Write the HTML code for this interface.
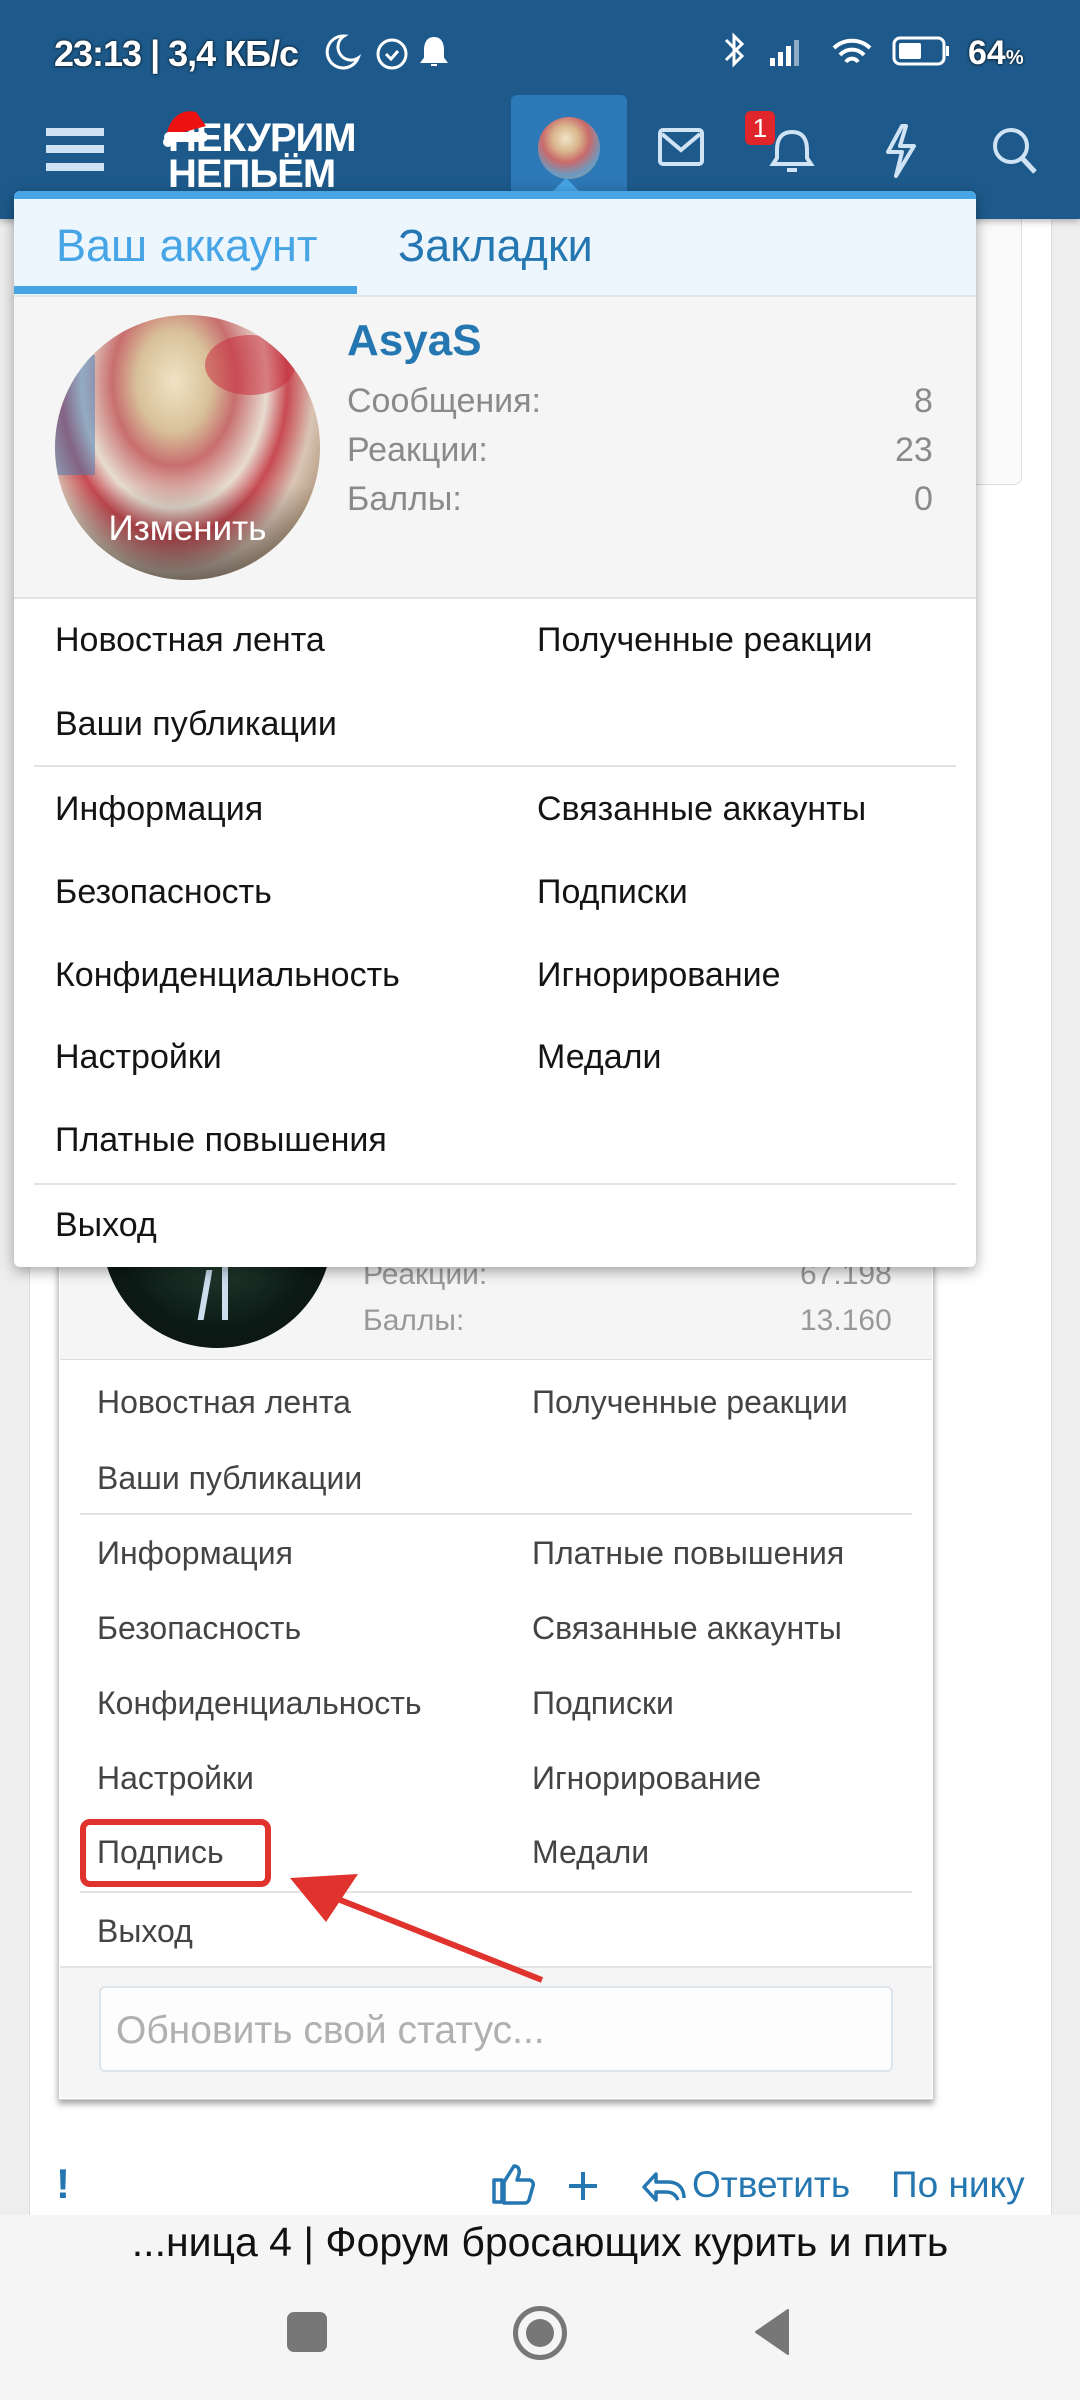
<!DOCTYPE html>
<html><head><meta charset="utf-8">
<style>
*{margin:0;padding:0;box-sizing:border-box}
body{width:1080px;height:2400px;position:relative;overflow:hidden;background:#eeeeee;font-family:"Liberation Sans","DejaVu Sans",sans-serif}
.a{position:absolute}
.t{position:absolute;white-space:nowrap;line-height:1}
</style></head><body>
<!-- page card -->
<div class="a" style="left:29px;top:200px;width:1023px;height:2015px;background:#fff;border-left:1px solid #ddd;border-right:1px solid #ddd"></div>
<div class="a" style="left:900px;top:210px;width:122px;height:275px;border:1px solid #ddd;border-top:none;border-radius:0 0 8px 8px;background:#fafafa"></div>
<!-- header -->
<div class="a" style="left:0;top:0;width:1080px;height:219px;background:#1d5a8b;box-shadow:0 3px 6px rgba(0,0,0,.25)"></div>
<div class="t" style="left:54px;top:36px;font-size:36px;color:#fff;font-weight:bold;letter-spacing:-1px;text-shadow:0 0 3px #000">23:13 | 3,4 КБ/с</div>
<svg class="a" style="left:322px;top:30px" width="130" height="44"><path d="M22 6a16 16 0 1 0 14 22a13 13 0 0 1-14-22z" fill="none" stroke="#fff" stroke-width="3"/><circle cx="70" cy="24" r="14" fill="none" stroke="#fff" stroke-width="3"/><path d="M64 24l5 5 7-8" stroke="#fff" stroke-width="3" fill="none"/><path d="M112 8c-7 0-9 6-9 12v8l-3 4h24l-3-4v-8c0-6-2-12-9-12z M109 35h6" fill="#fff" stroke="#fff" stroke-width="2"/></svg>
<svg class="a" style="left:718px;top:28px" width="310" height="46"><path d="M8 12l16 16-8 8V8l8 8-16 16" fill="none" stroke="#fff" stroke-width="3"/><rect x="52" y="30" width="5" height="8" fill="#fff"/><rect x="60" y="24" width="5" height="14" fill="#fff"/><rect x="68" y="18" width="5" height="20" fill="#fff"/><rect x="76" y="12" width="5" height="26" fill="#fff" opacity=".5"/><path d="M116 20a26 26 0 0 1 36 0M122 27a16 16 0 0 1 24 0M128 34a7 7 0 0 1 12 0" fill="none" stroke="#fff" stroke-width="4"/><rect x="176" y="10" width="50" height="26" rx="6" fill="none" stroke="#fff" stroke-width="3"/><rect x="181" y="15" width="22" height="16" rx="2" fill="#fff"/><rect x="228" y="18" width="3" height="10" fill="#fff"/></svg>
<div class="t" style="left:968px;top:36px;font-size:34px;color:#fff;font-weight:bold;text-shadow:0 0 3px #000">64<span style="font-size:20px">%</span></div>
<!-- hamburger -->
<div class="a" style="left:46px;top:128px;width:58px;height:8px;background:#cfe3f5"></div>
<div class="a" style="left:46px;top:145px;width:58px;height:8px;background:#cfe3f5"></div>
<div class="a" style="left:46px;top:163px;width:58px;height:8px;background:#cfe3f5"></div>
<!-- logo -->
<div class="t" style="left:168px;top:120px;font-size:40px;font-weight:900;color:#fff;letter-spacing:-1px;line-height:36px">НЕКУРИМ<br>НЕПЬЁМ</div>
<svg class="a" style="left:162px;top:102px" width="50" height="46"><path d="M4 36C6 18 18 6 34 10l10 14-36 10z" fill="#e11"/><rect x="2" y="30" width="44" height="10" rx="5" fill="#fff"/><circle cx="6" cy="40" r="5" fill="#fff"/></svg>
<!-- avatar tab -->
<div class="a" style="left:511px;top:95px;width:116px;height:100px;background:#2d78b6;border-radius:6px 6px 0 0"></div>
<div class="a" style="left:538px;top:117px;width:62px;height:62px;border-radius:50%;background:radial-gradient(circle at 45% 35%,#f1e6c8 0,#d9b58c 25%,#c96a6a 45%,#6a9bc2 70%,#c99a70 100%)"></div>
<div class="a" style="left:552px;top:178px;width:0;height:0;border-left:14px solid transparent;border-right:14px solid transparent;border-bottom:14px solid #47a5e6"></div>
<svg class="a" style="left:655px;top:120px" width="390" height="60"><rect x="5" y="10" width="42" height="34" rx="3" fill="none" stroke="#cfe3f5" stroke-width="4"/><path d="M7 14l19 16 19-16" fill="none" stroke="#cfe3f5" stroke-width="4"/><path d="M137 12c-12 0-15 9-15 18v8l-4 6h38l-4-6v-8c0-9-3-18-15-18zM132 50h10" fill="none" stroke="#cfe3f5" stroke-width="4"/><path d="M247 6l-14 26h14l-6 24 18-30h-14l6-20z" fill="none" stroke="#cfe3f5" stroke-width="4" stroke-linejoin="round"/><circle cx="356" cy="26" r="16" fill="none" stroke="#cfe3f5" stroke-width="4"/><path d="M367 38l13 14" stroke="#cfe3f5" stroke-width="5"/></svg>
<div class="a" style="left:745px;top:111px;width:30px;height:34px;background:#e0262b;border-radius:6px;color:#fff;font-size:26px;text-align:center;line-height:34px">1</div>
<!-- embedded screenshot -->
<div class="a" style="left:58px;top:1180px;width:876px;height:920px;background:#fff;box-shadow:0 4px 6px rgba(0,0,0,.35);border:1px solid #ccc"></div>
<div class="a" style="left:60px;top:1180px;width:872px;height:180px;background:#f5f5f5;border-bottom:1px solid #ddd"></div>
<div class="a" style="left:102px;top:1150px;width:230px;height:198px;border-radius:0 0 115px 115px;background:radial-gradient(circle at 50% 40%,#2d4a3a 0,#0c1a16 60%,#0a1210 100%);overflow:hidden"><div style="position:absolute;left:100px;top:120px;width:6px;height:50px;background:#cde;transform:skewX(-10deg)"></div><div style="position:absolute;left:120px;top:115px;width:6px;height:55px;background:#cde"></div></div>
<div class="t" style="left:363px;top:1260px;font-size:30px;color:#999">Реакции:</div>
<div class="t" style="left:800px;top:1260px;font-size:30px;color:#999">67.198</div>
<div class="t" style="left:363px;top:1306px;font-size:30px;color:#999">Баллы:</div>
<div class="t" style="left:800px;top:1306px;font-size:30px;color:#999">13.160</div>
<div class="a" style="left:60px;top:1966px;width:872px;height:132px;border-top:2px solid #e2e2e2;background:#f5f5f5"></div>
<div style="color:#444;font-size:32px">
<div class="t" style="left:97px;top:1386px">Новостная лента</div><div class="t" style="left:532px;top:1386px">Полученные реакции</div>
<div class="t" style="left:97px;top:1462px">Ваши публикации</div>
<div class="t" style="left:97px;top:1537px">Информация</div><div class="t" style="left:532px;top:1537px">Платные повышения</div>
<div class="t" style="left:97px;top:1612px">Безопасность</div><div class="t" style="left:532px;top:1612px">Связанные аккаунты</div>
<div class="t" style="left:97px;top:1687px">Конфиденциальность</div><div class="t" style="left:532px;top:1687px">Подписки</div>
<div class="t" style="left:97px;top:1762px">Настройки</div><div class="t" style="left:532px;top:1762px">Игнорирование</div>
<div class="t" style="left:97px;top:1836px">Подпись</div><div class="t" style="left:532px;top:1836px">Медали</div>
<div class="t" style="left:97px;top:1915px">Выход</div>
</div>
<div class="a" style="left:80px;top:1513px;width:832px;height:2px;background:#e2e2e2"></div>
<div class="a" style="left:80px;top:1891px;width:832px;height:2px;background:#e2e2e2"></div>
<div class="a" style="left:99px;top:1986px;width:794px;height:86px;border:2px solid #dde4ea;border-radius:6px;background:#fdfdfd"></div>
<div class="t" style="left:116px;top:2011px;font-size:39px;color:#b0b0b0">Обновить свой статус...</div>
<div class="a" style="left:80px;top:1819px;width:191px;height:68px;border:6px solid #e0332e;border-radius:10px"></div>
<svg class="a" style="left:280px;top:1840px" width="280" height="150"><path d="M262 140L40 52" stroke="#e0332e" stroke-width="6"/><path d="M10 38l68 -4-32 48z" fill="#e0332e"/></svg>
<!-- dropdown -->
<div class="a" style="left:14px;top:191px;width:962px;height:1076px;background:#fff;border-radius:6px;box-shadow:0 4px 14px rgba(0,0,0,.35);overflow:hidden">
 <div class="a" style="left:0;top:0;width:962px;height:8px;background:#47a5e6"></div>
 <div class="a" style="left:0;top:8px;width:962px;height:98px;background:#eef6fd;border-bottom:2px solid #dfe6ec"></div>
 <div class="a" style="left:0;top:95px;width:343px;height:8px;background:#47a5e6"></div>
 <div class="t" style="left:42px;top:32px;font-size:45px;color:#47a5e6">Ваш аккаунт</div>
 <div class="t" style="left:384px;top:32px;font-size:45px;color:#2577b1">Закладки</div>
 <div class="a" style="left:0;top:106px;width:962px;height:302px;background:#f5f5f5;border-bottom:2px solid #e2e2e2"></div>
 <div class="a" style="left:41px;top:124px;width:265px;height:265px;border-radius:50%;overflow:hidden;background:radial-gradient(ellipse at 45% 25%,#f0e3c4 0,#d8c19a 18%,#c86e6e 30%,#e7dcd0 45%,#c84a52 55%,#d9c5b5 68%,#a58a6a 85%,#5c6f8f 100%)">
  <div style="position:absolute;left:150px;top:20px;width:90px;height:60px;background:#c93040;opacity:.55;border-radius:50%"></div>
  <div style="position:absolute;left:0;top:40px;width:40px;height:120px;background:#3f7cb5;opacity:.5"></div>
  <div style="position:absolute;left:0;top:170px;width:265px;height:95px;background:linear-gradient(transparent,rgba(0,0,0,.45))"></div>
  <div class="t" style="left:0;width:265px;text-align:center;top:196px;font-size:35px;color:#fff">Изменить</div>
 </div>
 <div class="t" style="left:333px;top:128px;font-size:44px;font-weight:bold;color:#2577b1">AsyaS</div>
 <div class="t" style="left:333px;top:193px;font-size:34px;color:#8a8a8a">Сообщения:</div><div class="t" style="left:900px;top:193px;font-size:34px;color:#8a8a8a">8</div>
 <div class="t" style="left:333px;top:242px;font-size:34px;color:#8a8a8a">Реакции:</div><div class="t" style="left:881px;top:242px;font-size:34px;color:#8a8a8a">23</div>
 <div class="t" style="left:333px;top:291px;font-size:34px;color:#8a8a8a">Баллы:</div><div class="t" style="left:900px;top:291px;font-size:34px;color:#8a8a8a">0</div>
 <div style="font-size:34px;color:#141414">
  <div class="t" style="left:41px;top:432px">Новостная лента</div><div class="t" style="left:523px;top:432px">Полученные реакции</div>
  <div class="t" style="left:41px;top:516px">Ваши публикации</div>
  <div class="a" style="left:20px;top:574px;width:922px;height:2px;background:#e2e2e2"></div>
  <div class="t" style="left:41px;top:601px">Информация</div><div class="t" style="left:523px;top:601px">Связанные аккаунты</div>
  <div class="t" style="left:41px;top:684px">Безопасность</div><div class="t" style="left:523px;top:684px">Подписки</div>
  <div class="t" style="left:41px;top:767px">Конфиденциальность</div><div class="t" style="left:523px;top:767px">Игнорирование</div>
  <div class="t" style="left:41px;top:849px">Настройки</div><div class="t" style="left:523px;top:849px">Медали</div>
  <div class="t" style="left:41px;top:932px">Платные повышения</div>
  <div class="a" style="left:20px;top:992px;width:922px;height:2px;background:#e2e2e2"></div>
  <div class="t" style="left:41px;top:1017px">Выход</div>
 </div>
</div>
<!-- bottom action row -->
<div class="t" style="left:56px;top:2163px;font-size:42px;font-weight:bold;color:#2577b1">!</div>
<svg class="a" style="left:490px;top:2160px" width="200" height="50"><path d="M4 20h8v22H4zM14 22l10-16c4 0 6 3 5 8l-2 6h12c3 0 5 3 4 6l-4 14c-1 2-2 3-4 3H14z" fill="none" stroke="#2577b1" stroke-width="3.5" stroke-linejoin="round"/><path d="M93 12v28M79 26h28" stroke="#2577b1" stroke-width="4"/><path d="M194 38c0-10-6-16-16-16h-12v-8l-12 13 12 13v-8h10c6 0 10 3 12 8" fill="none" stroke="#2577b1" stroke-width="3.5" stroke-linejoin="round"/></svg>
<div class="t" style="left:692px;top:2166px;font-size:37px;color:#2577b1">Ответить</div>
<div class="t" style="left:891px;top:2166px;font-size:37px;color:#2577b1">По нику</div>
<!-- bottom bar -->
<div class="a" style="left:0;top:2215px;width:1080px;height:185px;background:#f5f5f5"></div>
<div class="t" style="left:0;width:1080px;text-align:center;top:2222px;font-size:41px;color:#111">...ница 4 | Форум бросающих курить и пить</div>
<div class="a" style="left:287px;top:2312px;width:40px;height:40px;border-radius:7px;background:#777"></div>
<div class="a" style="left:513px;top:2306px;width:54px;height:54px;border-radius:50%;border:5px solid #777"></div>
<div class="a" style="left:526px;top:2319px;width:28px;height:28px;border-radius:50%;background:#777"></div>
<svg class="a" style="left:752px;top:2308px" width="40" height="48"><path d="M36 2v44L4 24z" fill="#777" stroke="#777" stroke-width="2" stroke-linejoin="round"/></svg>
</body></html>
